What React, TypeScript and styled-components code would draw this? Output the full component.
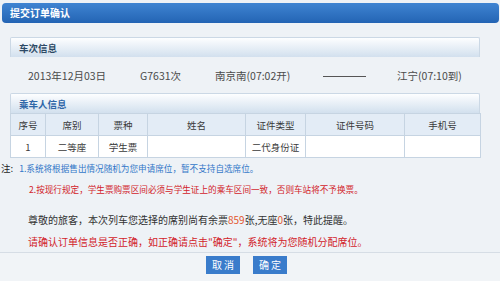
import styled, { createGlobalStyle } from 'styled-components';

const GlobalStyle = createGlobalStyle`
  html, body {
    margin: 0;
    padding: 0;
    background: #eef2f6;
  }
  body {
    font-family: "Noto Sans CJK SC", "Liberation Sans", sans-serif;
  }
`;

const columns = [
  { title: '序号', width: 35, value: '1' },
  { title: '席别', width: 53, value: '二等座' },
  { title: '票种', width: 49, value: '学生票' },
  { title: '姓名', width: 98, value: '' },
  { title: '证件类型', width: 60, value: '二代身份证' },
  { title: '证件号码', width: 99, value: '' },
  { title: '手机号', width: 76, value: '' },
];

const App = () => {
  return (
    <Page>
      <GlobalStyle />
      <TitleBar>提交订单确认</TitleBar>

      <Content>
        <SectionHead>车次信息</SectionHead>
        <TrainRow>
          <TrainCell $width={112}>2013年12月03日</TrainCell>
          <TrainCell $width={75}>G7631次</TrainCell>
          <TrainCell $width={108}>南京南(07:02开)</TrainCell>
          <TrainCell $width={74}>
            <Dash />
          </TrainCell>
          <TrainCell>江宁(07:10到)</TrainCell>
        </TrainRow>

        <SectionHead $blue>乘车人信息</SectionHead>
        <Table>
          <colgroup>
            {columns.map((c) => (
              <col key={c.title} style={{ width: c.width }} />
            ))}
          </colgroup>
          <thead>
            <tr>
              {columns.map((c) => (
                <HeadCell key={c.title}>{c.title}</HeadCell>
              ))}
            </tr>
          </thead>
          <tbody>
            <tr>
              {columns.map((c) => (
                <BodyCell key={c.title}>{c.value}</BodyCell>
              ))}
            </tr>
          </tbody>
        </Table>
      </Content>

      <Notes>
        <NoteLine>
          <NoteLabel>注:</NoteLabel>
          <BlueText>1.系统将根据售出情况随机为您申请席位，暂不支持自选席位。</BlueText>
        </NoteLine>
        <NoteLine $indent>
          <RedSmall>2.按现行规定，学生票购票区间必须与学生证上的乘车区间一致，否则车站将不予换票。</RedSmall>
        </NoteLine>
      </Notes>

      <Message>
        尊敬的旅客，本次列车您选择的席别尚有余票<Count>859</Count>张,无座<Count>0</Count>张，特此提醒。
      </Message>
      <Confirm>请确认订单信息是否正确，如正确请点击"确定"，系统将为您随机分配席位。</Confirm>

      <Footer>
        <Button>取 消</Button>
        <Button>确 定</Button>
      </Footer>
    </Page>
  );
};

const Page = styled.div`
  width: 500px;
  height: 281px;
  overflow: hidden;
  background: #eef2f6;
  padding-top: 3px;
  box-sizing: border-box;
`;

const TitleBar = styled.div`
  height: 20px;
  margin: 0 1px 0 2px;
  padding-left: 8px;
  border-radius: 4px;
  background: linear-gradient(#3f84d2, #2364b4);
  color: #fff;
  font-size: 10px;
  font-weight: bold;
  line-height: 20px;
`;

const Content = styled.div`
  padding: 14px 20px 0 10px;
`;

const SectionHead = styled.div<{ $blue?: boolean }>`
  height: 19px;
  padding-left: 8px;
  border: 1px solid #cbd8e5;
  border-bottom: none;
  border-radius: 2px 2px 0 0;
  background: linear-gradient(#fdfeff, #d2e0ee);
  color: ${({ $blue }) => ($blue ? '#2f67a8' : '#2d4a66')};
  font-size: 9.5px;
  font-weight: bold;
  line-height: 20px;
`;

const TrainRow = styled.div`
  display: flex;
  align-items: center;
  height: 36px;
  padding-left: 18px;
  color: #4a4a4a;
  font-size: 10.5px;
`;

const TrainCell = styled.div<{ $width?: number }>`
  flex: ${({ $width }) => ($width ? `0 0 ${$width}px` : '1')};
  display: flex;
  align-items: center;
  white-space: nowrap;
`;

const Dash = styled.div`
  width: 43px;
  height: 1px;
  margin-top: 3px;
  background: #555;
`;

const Table = styled.table`
  width: 470px;
  border-collapse: collapse;
  table-layout: fixed;
  font-size: 9.5px;
  color: #3a3a3a;
`;

const HeadCell = styled.th`
  height: 21px;
  padding: 0;
  border: 1px solid #c6d4e2;
  background: #e3ecf6;
  font-weight: normal;
  text-align: center;
`;

const BodyCell = styled.td`
  height: 21px;
  padding: 0;
  border: 1px solid #c6d4e2;
  background: #fff;
  text-align: center;
  white-space: nowrap;
`;

const Notes = styled.div`
  padding-left: 1px;
`;

const NoteLine = styled.div<{ $indent?: boolean }>`
  height: 21px;
  line-height: 21px;
  padding-left: ${({ $indent }) => ($indent ? '28px' : '0')};
  font-size: 8.6px;
  white-space: nowrap;
`;

const NoteLabel = styled.span`
  color: #222;
  font-size: 9.5px;
  margin-right: 6px;
`;

const BlueText = styled.span`
  color: #3277c8;
`;

const RedSmall = styled.span`
  color: #d2232a;
`;

const Message = styled.div`
  margin-top: 9px;
  padding-left: 28px;
  height: 22px;
  line-height: 22px;
  color: #333;
  font-size: 10px;
  white-space: nowrap;
`;

const Count = styled.span`
  color: #e4572e;
`;

const Confirm = styled.div`
  padding-left: 28px;
  height: 21px;
  line-height: 22px;
  color: #d2232a;
  font-size: 10px;
  white-space: nowrap;
`;

const Footer = styled.div`
  display: flex;
  gap: 13px;
  padding: 3px 0 0 206px;
  border-top: 1px solid #d6dde5;
  background: #f1f4f7;
  height: 40px;
`;

const Button = styled.button`
  width: 34px;
  height: 18px;
  padding: 0;
  border: none;
  background: #3a7ccb;
  color: #fff;
  font-family: "Noto Sans CJK SC", sans-serif;
  font-size: 10px;
  line-height: 18px;
`;

export default App;
